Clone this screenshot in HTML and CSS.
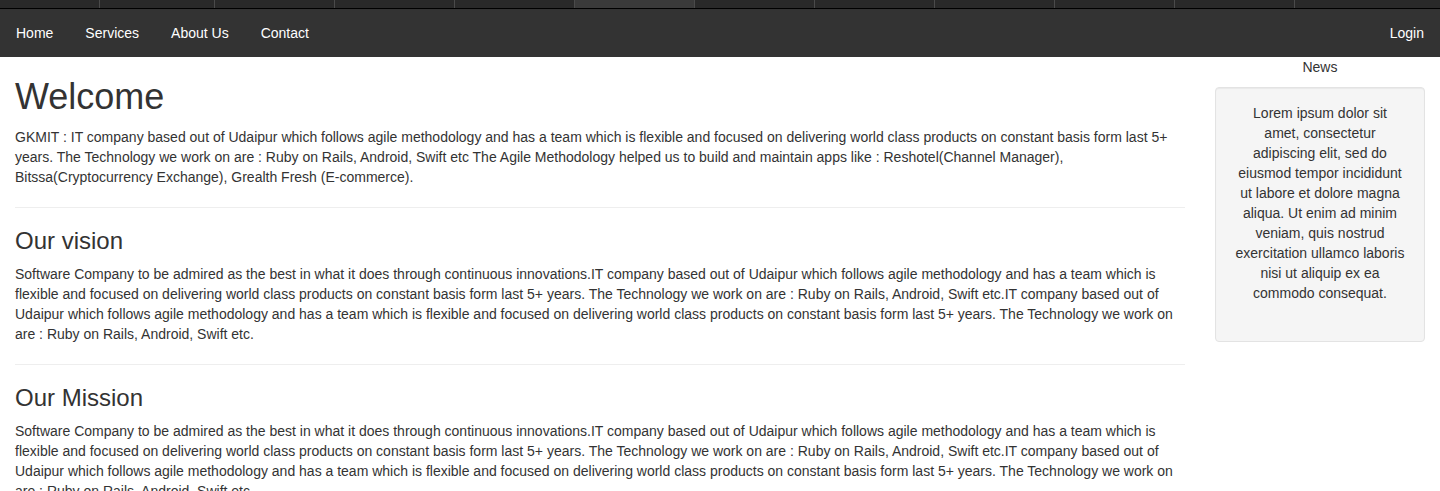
FILE: index.html
```html
<!DOCTYPE html>
<html lang="en">
<head>
<meta charset="utf-8">
<title>GKMIT</title>
<link rel="stylesheet" href="styles.css">
</head>
<body>
<div class="tabstrip">
  <div class="tab tab-first"></div>
  <div class="tab tab-second"></div>
  <div class="tab"></div>
  <div class="tab"></div>
  <div class="tab"></div>
  <div class="tab tab-active"></div>
  <div class="tab"></div>
  <div class="tab"></div>
  <div class="tab"></div>
  <div class="tab"></div>
  <div class="tab"></div>
  <div class="tab tab-last"></div>
</div>
<nav class="navbar">
  <ul class="nav-left">
    <li><a href="#">Home</a></li>
    <li><a href="#">Services</a></li>
    <li><a href="#">About Us</a></li>
    <li><a href="#">Contact</a></li>
  </ul>
  <ul class="nav-right">
    <li><a href="#">Login</a></li>
  </ul>
</nav>
<div class="row">
  <main class="main-col">
    <h1>Welcome</h1>
    <p>GKMIT : IT company based out of Udaipur which follows agile methodology and has a team which is flexible and focused on delivering world class products on constant basis form last 5+ years. The Technology we work on are : Ruby on Rails, Android, Swift etc The Agile Methodology helped us to build and maintain apps like : Reshotel(Channel Manager), Bitssa(Cryptocurrency Exchange), Grealth Fresh (E-commerce).</p>
    <hr>
    <h3>Our vision</h3>
    <p>Software Company to be admired as the best in what it does through continuous innovations.IT company based out of Udaipur which follows agile methodology and has a team which is flexible and focused on delivering world class products on constant basis form last 5+ years. The Technology we work on are : Ruby on Rails, Android, Swift etc.IT company based out of Udaipur which follows agile methodology and has a team which is flexible and focused on delivering world class products on constant basis form last 5+ years. The Technology we work on are : Ruby on Rails, Android, Swift etc.</p>
    <hr>
    <h3>Our Mission</h3>
    <p>Software Company to be admired as the best in what it does through continuous innovations.IT company based out of Udaipur which follows agile methodology and has a team which is flexible and focused on delivering world class products on constant basis form last 5+ years. The Technology we work on are : Ruby on Rails, Android, Swift etc.IT company based out of Udaipur which follows agile methodology and has a team which is flexible and focused on delivering world class products on constant basis form last 5+ years. The Technology we work on are : Ruby on Rails, Android, Swift etc.</p>
  </main>
  <aside class="side-col">
    <p class="news-title">News</p>
    <div class="well">Lorem ipsum dolor sit amet, consectetur adipiscing elit, sed do eiusmod tempor incididunt ut labore et dolore magna aliqua. Ut enim ad minim veniam, quis nostrud exercitation ullamco laboris nisi ut aliquip ex ea commodo consequat.</div>
  </aside>
</div>
</body>
</html>
```

FILE: styles.css
```css
* {
  box-sizing: border-box;
}

html, body {
  margin: 0;
  padding: 0;
}

body {
  font-family: "Liberation Sans", Helvetica, Arial, sans-serif;
  font-size: 14px;
  line-height: 20px;
  color: #333;
  background: #fff;
}

.tabstrip {
  display: flex;
  height: 9px;
  background: #292929;
  border-bottom: 1px solid #000;
  overflow: hidden;
}

.tab {
  flex: 0 0 120px;
  border-right: 1px solid #4a4a4a;
}

.tab-first {
  flex-basis: 100px;
}

.tab-second {
  flex-basis: 115px;
}

.tab-active {
  background: #3a3a3a;
}

.tab-last {
  flex: 1 1 auto;
  border-right: none;
}

.navbar {
  display: flex;
  justify-content: space-between;
  align-items: center;
  height: 48px;
  background: #333;
}

.navbar ul {
  display: flex;
  margin: 0;
  padding: 0;
  list-style: none;
}

.navbar a {
  display: block;
  padding: 0 16px;
  line-height: 48px;
  color: #fff;
  text-decoration: none;
  font-size: 14px;
}

.row {
  display: flex;
  align-items: flex-start;
}

.main-col {
  flex: 0 0 83.3333%;
  padding: 0 15px;
}

.side-col {
  flex: 0 0 16.6667%;
  padding: 0 15px;
}

h1 {
  font-size: 36px;
  font-weight: normal;
  line-height: 1.1;
  margin: 20px 0 10px;
}

h3 {
  font-size: 24px;
  font-weight: normal;
  line-height: 1.1;
  margin: 20px 0 10px;
}

p {
  margin: 0 0 10px;
}

hr {
  border: 0;
  border-top: 1px solid #eee;
  margin: 20px 0;
  height: 0;
}

.news-title {
  text-align: center;
  margin: 0 0 10px;
}

.well {
  text-align: center;
  background: #f5f5f5;
  border: 1px solid #e3e3e3;
  border-radius: 4px;
  padding: 15px 19px 38px;
  box-shadow: inset 0 1px 1px rgba(0, 0, 0, 0.05);
}
```
